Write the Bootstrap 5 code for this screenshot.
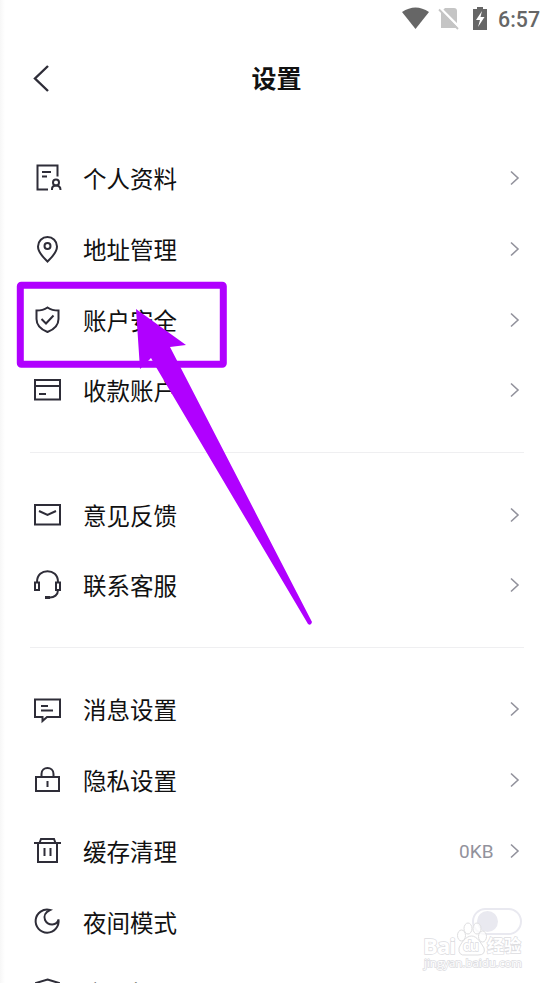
<!DOCTYPE html>
<html lang="zh-CN">
<head>
<meta charset="utf-8">
<meta name="viewport" content="width=device-width, initial-scale=1">
<title>设置</title>
<link href="https://cdn.jsdelivr.net/npm/bootstrap@5.3.0/dist/css/bootstrap.min.css" rel="stylesheet">
<style>
html,body{overflow:hidden}
body{font-family:Roboto,"Noto Sans CJK SC",sans-serif;color:#111;background:#fff}
.screen{width:553px;height:983px;background:linear-gradient(90deg,#f7f7f7,#fff 5px)}
.statusbar{height:38px;padding-right:13px}
.clock{font-size:21.3px;font-weight:500;color:#666;line-height:38px;padding-top:1px}
.topbar{height:80px;padding-left:30px}
.page-title{font-size:25px;font-weight:700;line-height:80px;margin:0;padding-top:3px;left:0;width:553px}
.settings-list{padding:25px 29px 0 30px}
.setting{height:70.7px;color:#111}
.glyph{width:34px;height:34px;margin-right:19px}
.ico{fill:none;stroke:#2e2d38;stroke-width:2}
.back-arrow{stroke-width:2.4}
.setting-name{font-size:23.5px;line-height:35px;padding-top:5px}
.setting-last .setting-name{padding-top:6px}
.divide{height:1px;background:#efeff1;margin:26.3px 0 26.2px}
.chev{fill:none;stroke:#92929c;stroke-width:1.6;margin-right:4px}
.value{font-size:19px;color:#92929c;margin-right:16.5px;padding-top:2px}
.toggle{width:50px;height:27px;border:2px solid #e9e9f0;border-radius:14px;margin-right:2px}
.knob{width:21px;height:21px;border-radius:50%;background:#e9e9f0;margin-left:3px}
.overlay{left:0;top:0;pointer-events:none}
</style>
</head>
<body>
<div class="screen position-relative overflow-hidden">
<div class="statusbar d-flex align-items-center justify-content-end">
<svg width="96" height="38" viewBox="402 0 96 38"><path d="M402 12Q415.500 3 429 12L415.500 29Z" fill="#666"/><path d="M445 8H454Q457 8 457 11V28H441V12Z" fill="#c5c5c5"/><path d="M439.500 7.500L460 28" stroke="#fff" stroke-width="2.500"/><path d="M439 9.500L458 29" stroke="#c5c5c5" stroke-width="1.800"/><path d="M473 9H477V7H483V9H487V30H473Z" fill="#666"/><path d="M482 11L476 20H480L478 27L484.500 17H480.500Z" fill="#fff"/></svg>
<span class="clock">6:57</span>
</div>
<header class="topbar position-relative d-flex align-items-center">
<svg width="24" height="32" viewBox="30 62 24 32"><path class="ico back-arrow" d="M48 66L35 78.500L48 91"/></svg>
<h1 class="page-title position-absolute text-center">设置</h1>
</header>
<main class="settings-list">
<div class="setting d-flex align-items-center"><svg class="glyph" viewBox="0 0 34 34"><path class="ico" d="M18 28.500H7.500V4.500H27.500V15.500M12 11H21M12 15.500H17M22 29V28Q22 24.500 26 24.500Q30.500 24.500 30.500 29"/><circle class="ico" cx="26" cy="21.500" r="3"/></svg><span class="setting-name flex-grow-1">个人资料</span><svg class="chev" width="10" height="16"><path d="M1 1.500L8 8L1 14.500"/></svg></div>
<div class="setting d-flex align-items-center"><svg class="glyph" viewBox="0 0 34 34"><path class="ico" d="M17.500 29.500C14 26 8 21 8 14.500A9.500 9.500 0 0 1 27 14.500C27 21 21 26 17.500 29.500Z"/><circle class="ico" cx="17.500" cy="14" r="3"/></svg><span class="setting-name flex-grow-1">地址管理</span><svg class="chev" width="10" height="16"><path d="M1 1.500L8 8L1 14.500"/></svg></div>
<div class="setting d-flex align-items-center"><svg class="glyph" viewBox="0 0 34 34"><path class="ico" d="M17.500 4.500Q22 7.500 28.500 7.500V16C28.500 22 24 26.500 17.500 29C11 26.500 6.500 22 6.500 16V7.500Q13 7.500 17.500 4.500ZM11.500 16L16 20.500L23.500 12.500"/></svg><span class="setting-name flex-grow-1">账户安全</span><svg class="chev" width="10" height="16"><path d="M1 1.500L8 8L1 14.500"/></svg></div>
<div class="setting d-flex align-items-center"><svg class="glyph" viewBox="0 0 34 34"><path class="ico" d="M5 7H30V26.500H5ZM5 13H30M9 21H16"/></svg><span class="setting-name flex-grow-1">收款账户</span><svg class="chev" width="10" height="16"><path d="M1 1.500L8 8L1 14.500"/></svg></div>
<div class="divide"></div>
<div class="setting d-flex align-items-center"><svg class="glyph" viewBox="0 0 34 34"><path class="ico" d="M5 7H30V26.500H5ZM9 13L17.500 17L26 13"/></svg><span class="setting-name flex-grow-1">意见反馈</span><svg class="chev" width="10" height="16"><path d="M1 1.500L8 8L1 14.500"/></svg></div>
<div class="setting d-flex align-items-center"><svg class="glyph" viewBox="0 0 34 34"><path class="ico" d="M7 14C7 -.5 28 -.5 28 14M28 22C28 27 24 29.500 20 29.500M5 14.500H9V22H5ZM26 14.500H30V22H26Z"/><path d="M15 28H20V31H15Z" fill="#2e2d38"/></svg><span class="setting-name flex-grow-1">联系客服</span><svg class="chev" width="10" height="16"><path d="M1 1.500L8 8L1 14.500"/></svg></div>
<div class="divide"></div>
<div class="setting d-flex align-items-center"><svg class="glyph" viewBox="0 0 34 34"><path class="ico" d="M5 7.500H30V25H17L12.500 29V25H5ZM11 14H18M11 18.500H23"/></svg><span class="setting-name flex-grow-1">消息设置</span><svg class="chev" width="10" height="16"><path d="M1 1.500L8 8L1 14.500"/></svg></div>
<div class="setting d-flex align-items-center"><svg class="glyph" viewBox="0 0 34 34"><path class="ico" d="M6 14H29V28H6ZM11.500 14V11C11.500 3 23.500 3 23.500 11V14M17.500 18V24"/></svg><span class="setting-name flex-grow-1">隐私设置</span><svg class="chev" width="10" height="16"><path d="M1 1.500L8 8L1 14.500"/></svg></div>
<div class="setting d-flex align-items-center"><svg class="glyph" viewBox="0 0 34 34"><path class="ico" d="M4 9H31M8 9V28H27V9M9.500 9L11 5H24L25.500 9M14.500 14V22M20.500 14V22"/></svg><span class="setting-name flex-grow-1">缓存清理</span><span class="value">0KB</span><svg class="chev" width="10" height="16"><path d="M1 1.500L8 8L1 14.500"/></svg></div>
<div class="setting d-flex align-items-center"><svg class="glyph" viewBox="0 0 34 34"><path class="ico" d="M20 5A11.500 11.500 0 1 0 28.500 14.500C27 21 18 21 15 15C13.500 11 15.500 7 20 5Z"/></svg><span class="setting-name flex-grow-1">夜间模式</span><span class="toggle d-flex align-items-center"><span class="knob"></span></span></div>
<div class="setting setting-last d-flex align-items-center"><svg class="glyph" viewBox="0 0 34 34"><path class="ico" d="M17.500 4.500L29 8V17Q29 25 17.500 29Q6 25 6 17V8Z"/></svg><span class="setting-name flex-grow-1">应用权限</span></div>
</main>
<svg class="overlay position-absolute" width="553" height="983">
<rect x="20.300" y="285.300" width="203" height="79" rx="1" fill="none" stroke="#b000ff" stroke-width="7" stroke-linejoin="round"/>
<path d="M136 309L186 345L170 347L312 622Q311 626 308 624L156 367L151 358L140 369Z" fill="#b000ff"/>
<g fill="#fff" fill-opacity=".7" stroke="#dedee0" stroke-width="1"><ellipse cx="461.500" cy="935.500" rx="4" ry="5.500"/><ellipse cx="468" cy="928.500" rx="4" ry="5.500"/><ellipse cx="477" cy="928.500" rx="4" ry="5.500"/><ellipse cx="482.500" cy="936.500" rx="4" ry="5.500"/><path d="M471.500 936C466 936 461 943 459 948Q458 956 466 955H478Q486 955 484 948C481 943 477 936 471.500 936Z"/></g>
<g fill="#fff" stroke="#dcdcdf" stroke-width="1.400" paint-order="stroke" font-family="Open Sans,Noto Sans CJK SC,sans-serif" font-weight="700"><text x="423" y="954" font-size="22" textLength="33">Bai</text><text x="463" y="951" font-size="14" textLength="16">du</text><text x="487" y="952" font-size="17" textLength="34">经验</text><text x="424" y="967" font-size="11" font-weight="400" textLength="98" lengthAdjust="spacingAndGlyphs">jingyan.baidu.com</text></g>
</svg>
</div>
<script src="https://cdn.jsdelivr.net/npm/bootstrap@5.3.0/dist/js/bootstrap.bundle.min.js"></script>
</body>
</html>
